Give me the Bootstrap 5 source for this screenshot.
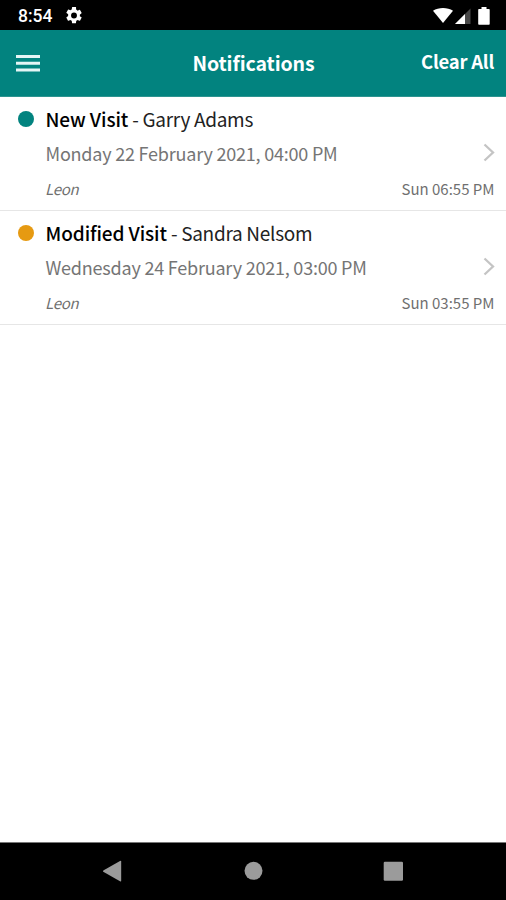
<!DOCTYPE html>
<html lang="en">
<head>
<meta charset="utf-8">
<meta name="viewport" content="width=device-width, initial-scale=1">
<title>Notifications</title>
<link href="https://cdn.jsdelivr.net/npm/bootstrap@5.3.0/dist/css/bootstrap.min.css" rel="stylesheet">
<style>
body { font-family: "Noto Sans CJK SC", "Noto Sans", sans-serif; background: #fff; height: 900px; overflow: hidden; }
svg { display: block; }
.status-bar { height: 30px; background: #000; color: #fff; padding: 2px 16px 0 18px; font: 500 17.5px/28px Roboto, sans-serif; }
.status-bar .gear { margin-left: 14px; margin-bottom: 1px; }
.status-bar .signal { margin-left: 2px; }
.status-bar .battery { margin-left: 7px; }
.app-bar { height: 66.5px; background: #02837f; color: #fff; display: grid; grid-template-columns: 1fr auto 1fr; padding: 0 12px 0 16px; font-weight: 700; border-bottom: 1px solid #2d9490; }
.app-bar svg { margin-top: 1px; }
.app-title { font-size: 19.5px; line-height: 28px; letter-spacing: -.08px; margin-right: 3px; }
.clear-link { font-size: 18.500px; letter-spacing: -.25px; line-height: 28px; color: #fff; margin-bottom: 3px; }
.note-item { height: 114.3px; padding: 8px 11.5px 9px 17.5px; border-bottom: 1px solid #e6e6e6; }
.note-dot { width: 16px; height: 16px; border-radius: 50%; margin: 6px 12px 0 0; }
.dot-new { background: #02837f; }
.dot-modified { background: #e69a12; }
.note-title { font-size: 19px; line-height: 28px; color: #222; letter-spacing: -.29px; }
.note-title b { font-weight: 500; color: #000; letter-spacing: -.1px; }
.note-date { font-size: 18px; line-height: 28px; color: #757575; margin-top: 6px; letter-spacing: -.21px; }
.note-foot { font-size: 15px; line-height: 24px; color: #707070; margin-top: 10px; }
.note-foot i { letter-spacing: -.25px; margin-left: -.5px; }
.nav-bar { height: 58px; background: #000; border-top: 1px solid #777; }
</style>
</head>
<body class="d-flex flex-column">
<header>
  <div class="status-bar d-flex align-items-center">
    <span>8:54</span>
    <svg class="gear" width="16" height="17" viewBox="2.2 2 19.6 20" preserveAspectRatio="none" fill="#fff"><path d="M19.14 12.94c.04-.3.06-.61.06-.94s-.02-.64-.07-.94l2.03-1.58a.49.49 0 0 0 .12-.61l-1.92-3.32a.49.49 0 0 0-.59-.22l-2.39.96a7 7 0 0 0-1.62-.94l-.36-2.54A.48.48 0 0 0 13.92 2h-3.84a.47.47 0 0 0-.47.41l-.36 2.54c-.59.24-1.13.57-1.62.94l-2.39-.96a.48.48 0 0 0-.59.22L2.74 8.47a.48.48 0 0 0 .12.61l2.03 1.58c-.05.3-.09.63-.09.94s.02.64.07.94l-2.03 1.58a.49.49 0 0 0-.12.61l1.92 3.32c.12.22.37.29.59.22l2.39-.96c.5.38 1.03.7 1.62.94l.36 2.54c.05.24.24.41.48.41h3.84c.24 0 .44-.17.47-.41l.36-2.54c.59-.24 1.13-.56 1.62-.94l2.39.96c.22.08.47 0 .59-.22l1.92-3.32a.48.48 0 0 0-.12-.61zM12 15.6a3.6 3.6 0 1 1 0-7.2 3.6 3.6 0 0 1 0 7.2z"/></svg>
    <svg class="ms-auto" width="20" height="16" viewBox="0 0 20 16" fill="#fff"><path d="M10 15 0 2.800C5.500-.8 14.500-.8 20 2.800z"/></svg>
    <svg class="signal" width="16" height="16" viewBox="0 0 16 16"><path d="M15.500.5V16H0z" fill="#484848"/><path d="M10 6V16H0z" fill="#fff"/></svg>
    <svg class="battery" width="12" height="18" viewBox="0 0 12 18" fill="#fff"><path d="M3.500 0h5v2H11q.7 0 .7.700V17q0 .8-.7.800H1q-.8 0-.8-.8V2.700Q.2 2 1 2h2.500z"/></svg>
  </div>
  <nav class="app-bar align-items-center">
    <svg width="24" height="17" viewBox="0 0 24 17" fill="#e4f5f5" role="img" aria-label="Menu"><path d="M0 0h24v3H0zM0 6.800h24v3H0zM0 13.500h24v3H0z"/></svg>
    <span class="app-title">Notifications</span>
    <a href="#" class="clear-link text-decoration-none text-end">Clear All</a>
  </nav>
</header>
<main class="flex-grow-1">
  <div class="note-item d-flex">
    <span class="note-dot dot-new flex-shrink-0"></span>
    <div class="flex-grow-1">
      <div class="note-title"><b>New Visit</b> - <span>Garry Adams</span></div>
      <div class="note-date d-flex justify-content-between align-items-center"><span>Monday 22 February 2021, 04:00 PM</span>
        <svg width="12" height="19" viewBox="0 0 12 19" fill="none" stroke="#c4c4c4" stroke-width="2.300"><path d="m1.500 1.500 8.500 8-8.500 8"/></svg></div>
      <div class="note-foot d-flex justify-content-between"><i>Leon</i><span>Sun 06:55 PM</span></div>
    </div>
  </div>
  <div class="note-item d-flex">
    <span class="note-dot dot-modified flex-shrink-0"></span>
    <div class="flex-grow-1">
      <div class="note-title"><b>Modified Visit</b> - <span>Sandra Nelsom</span></div>
      <div class="note-date d-flex justify-content-between align-items-center"><span>Wednesday 24 February 2021, 03:00 PM</span>
        <svg width="12" height="19" viewBox="0 0 12 19" fill="none" stroke="#c4c4c4" stroke-width="2.300"><path d="m1.500 1.500 8.500 8-8.500 8"/></svg></div>
      <div class="note-foot d-flex justify-content-between"><i>Leon</i><span>Sun 03:55 PM</span></div>
    </div>
  </div>
</main>
<footer class="nav-bar">
  <svg width="506" height="57" viewBox="0 843 506 57" fill="#9b9b9b"><path d="M103 871.200q0-.5.7-.9L120 861q1.200-.6 1.200.6V880.500q0 1.300-1.200.7L103.700 872q-.7-.4-.7-.8z"/><circle cx="253.500" cy="870.800" r="9"/><rect x="383.700" y="861.700" width="19.300" height="19" rx="1.200"/></svg>
</footer>
<script src="https://cdn.jsdelivr.net/npm/bootstrap@5.3.0/dist/js/bootstrap.bundle.min.js"></script>
</body>
</html>
